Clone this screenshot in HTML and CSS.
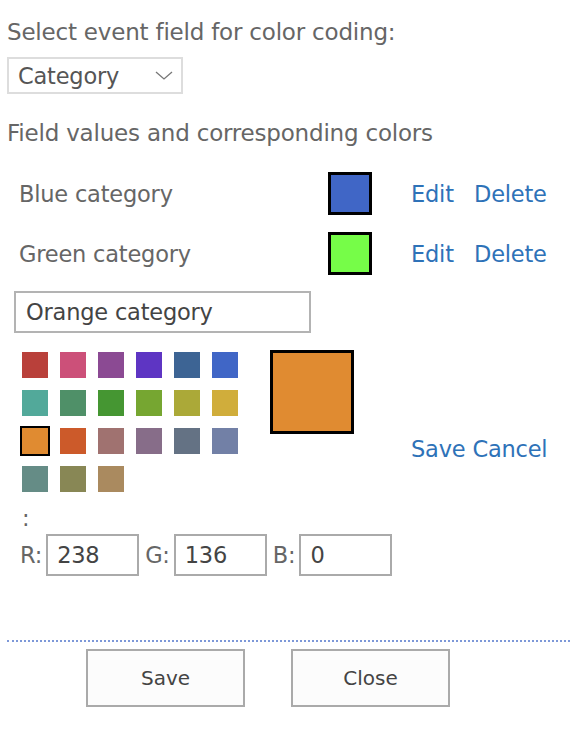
FILE: index.html
```html
<!DOCTYPE html>
<html lang="en">
<head>
    <meta charset="UTF-8">
    <title>Color coding</title>
    <link rel="stylesheet" href="styles.css">
</head>
<body>
    <div class="dialog">
        <div class="field-label">Select event field for color coding:</div>
        <div class="select-box">
            <span>Category</span>
            <svg class="chevron" width="18" height="10" viewBox="0 0 18 10">
                <path d="M1 1 L9 8 L17 1" fill="none" stroke="#777" stroke-width="1.3"/>
            </svg>
        </div>

        <div class="field-label values-label">Field values and corresponding colors</div>

        <div class="value-list">
            <div class="value-row">
                <span class="value-name">Blue category</span>
                <span class="swatch" style="background: #4066c6;"></span>
                <a class="link" href="#">Edit</a>
                <a class="link" href="#">Delete</a>
            </div>
            <div class="value-row">
                <span class="value-name">Green category</span>
                <span class="swatch" style="background: #76fd48;"></span>
                <a class="link" href="#">Edit</a>
                <a class="link" href="#">Delete</a>
            </div>
        </div>

        <div class="edit-block">
            <input class="name-input" type="text" value="Orange category">

            <div class="edit-main">
                <div class="palette">
                    <span class="chip" style="background: #b9403a;"></span>
                    <span class="chip" style="background: #cc5079;"></span>
                    <span class="chip" style="background: #8b4a93;"></span>
                    <span class="chip" style="background: #5e35c3;"></span>
                    <span class="chip" style="background: #3d6494;"></span>
                    <span class="chip" style="background: #4066c6;"></span>
                    <span class="chip" style="background: #52a99a;"></span>
                    <span class="chip" style="background: #4f9068;"></span>
                    <span class="chip" style="background: #459632;"></span>
                    <span class="chip" style="background: #76a631;"></span>
                    <span class="chip" style="background: #aba938;"></span>
                    <span class="chip" style="background: #d0ad3b;"></span>
                    <span class="chip selected" style="background: #e08b31;"></span>
                    <span class="chip" style="background: #cc5a2a;"></span>
                    <span class="chip" style="background: #a07270;"></span>
                    <span class="chip" style="background: #876d89;"></span>
                    <span class="chip" style="background: #647284;"></span>
                    <span class="chip" style="background: #7280a6;"></span>
                    <span class="chip" style="background: #658c86;"></span>
                    <span class="chip" style="background: #888755;"></span>
                    <span class="chip" style="background: #aa8a5f;"></span>
                </div>
                <div class="preview" style="background: #e08b31;"></div>
                <div class="edit-actions">
                    <a class="link" href="#">Save</a> <a class="link" href="#">Cancel</a>
                </div>
            </div>

            <div class="colon">:</div>
            <div class="rgb-row">
                <label>R:</label><input class="rgb-input" type="text" value="238">
                <label>G:</label><input class="rgb-input" type="text" value="136">
                <label>B:</label><input class="rgb-input" type="text" value="0">
            </div>
        </div>

        <div class="footer">
            <button class="btn">Save</button>
            <button class="btn">Close</button>
        </div>
    </div>
</body>
</html>
```

FILE: styles.css
```css
* {
    margin: 0;
    padding: 0;
    box-sizing: border-box;
}

body {
    font-family: "DejaVu Sans", Verdana, sans-serif;
    color: #666;
    background: white;
    letter-spacing: -0.2px;
}

.dialog {
    padding: 18px 0 0 7px;
}

.field-label {
    font-size: 23px;
    line-height: 28px;
}

.select-box {
    width: 176px;
    height: 37px;
    margin-top: 11px;
    border: 2px solid #ddd;
    padding-left: 9px;
    display: flex;
    align-items: center;
    justify-content: space-between;
    padding-right: 8px;
    font-size: 22.5px;
    color: #555;
}

.chevron {
    margin-top: 1px;
}

.values-label {
    margin-top: 25px;
}

.value-list {
    margin-top: 25px;
    padding-left: 12px;
    display: flex;
    flex-direction: column;
    gap: 17px;
}

.value-row {
    display: grid;
    grid-template-columns: 309px 83px 63px auto;
    align-items: center;
    font-size: 22.5px;
}

.swatch {
    width: 44px;
    height: 43px;
    border: 3px solid #000;
}

.link {
    color: #2e72b8;
    text-decoration: none;
    font-size: 22.5px;
}

.edit-block {
    margin-top: 16px;
    padding-left: 7px;
}

.name-input {
    width: 297px;
    height: 42px;
    border: 2px solid #b3b3b3;
    padding-left: 10px;
    font-family: inherit;
    letter-spacing: -0.2px;
    font-size: 22.5px;
    color: #444;
    outline: none;
}

.edit-main {
    display: flex;
    align-items: flex-start;
    padding-left: 8px;
    margin-top: 17px;
}

.palette {
    display: grid;
    grid-template-columns: repeat(6, 26px);
    grid-auto-rows: 26px;
    gap: 12px;
    margin-top: 2px;
}

.chip {
    width: 26px;
    height: 26px;
}

.chip.selected {
    outline: 2px solid #000;
}

.preview {
    width: 84px;
    height: 84px;
    border: 3px solid #000;
    margin-left: 32px;
}

.edit-actions {
    margin-left: 57px;
    margin-top: 86px;
    font-size: 22.5px;
}

.colon {
    padding-left: 8px;
    font-size: 22.5px;
    line-height: 28px;
    margin-top: 12px;
}

.rgb-row {
    display: flex;
    align-items: center;
    margin-top: 2px;
    padding-left: 6px;
    font-size: 22.5px;
}

.rgb-row label {
    margin-right: 4px;
}

.rgb-input {
    width: 93px;
    height: 42px;
    border: 2px solid #aaa;
    padding-left: 9px;
    margin-right: 6px;
    font-family: inherit;
    letter-spacing: -0.2px;
    font-size: 22.5px;
    color: #444;
    outline: none;
}

.footer {
    margin-top: 64px;
    border-top: 2px dotted #7d98d8;
    display: flex;
    gap: 46px;
    padding: 7px 0 0 79px;
}

.btn {
    width: 159px;
    height: 58px;
    border: 2px solid #aaa;
    background: #fcfcfc;
    font-family: inherit;
    font-size: 20px;
    color: #444;
}
```
